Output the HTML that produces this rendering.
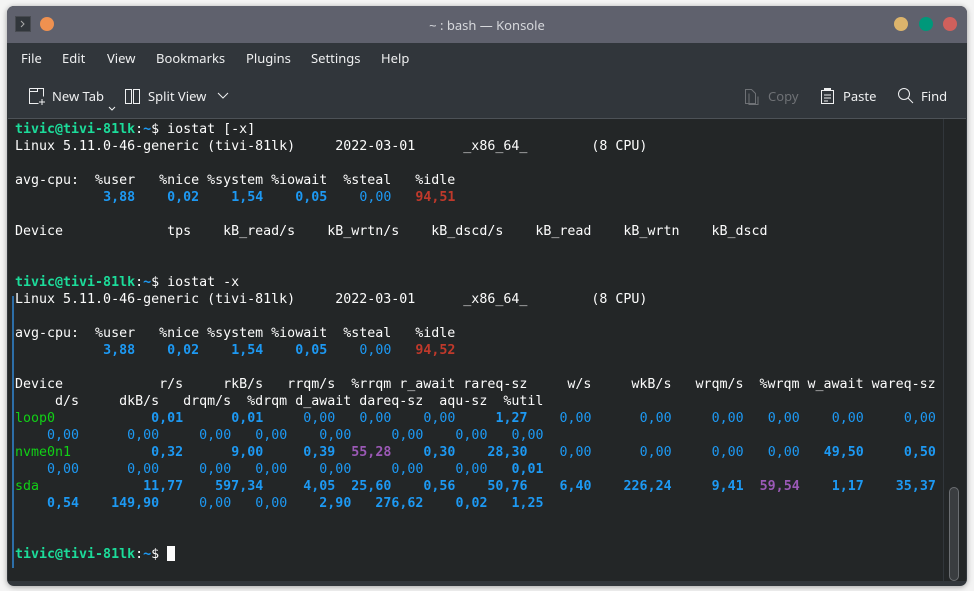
<!DOCTYPE html>
<html><head><meta charset="utf-8"><style>
*{margin:0;padding:0;box-sizing:border-box}
body{width:974px;height:591px;background:#f4f4f4;position:relative;overflow:hidden;font-family:"Noto Sans","DejaVu Sans","Liberation Sans",sans-serif}
.win{position:absolute;left:7px;top:6px;width:960px;height:580px;border-radius:7px;background:#31363b;overflow:hidden;box-shadow:0 1px 6px rgba(0,0,0,.35)}
.title{position:absolute;left:0;top:0;width:960px;height:37px;background:#5f616d}
.title .t{position:absolute;left:0;width:960px;top:10px;text-align:center;color:#d6d8dc;font-size:13px}
.ic{position:absolute;left:8px;top:10px;width:16px;height:16px;background:#31363b;border:1px solid #484b51}
.dot{position:absolute;width:14px;height:14px;border-radius:50%;top:11px}
.menu{position:absolute;top:43px;font-size:13px;color:#eff0f1}
.tb{position:absolute;top:81px;font-size:13px;color:#eff0f1}
.term{position:absolute;left:1px;top:112px;width:958px;height:463px;background:#232627;border-top:1px solid #4d5257}
pre{position:absolute;left:7px;top:2px;font-family:"DejaVu Sans Mono","Liberation Mono",monospace;font-size:13.3px;line-height:17px;color:#fcfcfc}
.g{color:#1cdc9a;font-weight:bold}.h{color:#1d99f3;font-weight:bold}
.b{color:#1d99f3;font-weight:bold}.z{color:#1d99f3}
.r{color:#c0392b;font-weight:bold}.p{color:#9b59b6;font-weight:bold}.d{color:#11d116}
.cur{display:inline-block;width:8px;height:15px;background:#fcfcfc;vertical-align:-3px}
</style></head><body>
<div class="win">
<div class="title"><div class="ic"><svg width="14" height="14" style="position:absolute;left:0;top:0"><path d="M5 4l3 3-3 3" stroke="#aaa" fill="none"/></svg></div>
<div class="dot" style="left:33px;background:#ef9150"></div>
<div class="t">~ : bash — Konsole</div>
<div class="dot" style="left:887px;background:#dcb46c"></div>
<div class="dot" style="left:912px;background:#00987a"></div>
<div class="dot" style="left:936px;background:#d0605c"></div>
</div>
<div class="menu" style="left:14px">File</div>
<div class="menu" style="left:55px">Edit</div>
<div class="menu" style="left:100px">View</div>
<div class="menu" style="left:149px">Bookmarks</div>
<div class="menu" style="left:239px">Plugins</div>
<div class="menu" style="left:304px">Settings</div>
<div class="menu" style="left:374px">Help</div>
<svg style="position:absolute;left:21px;top:81px" width="20" height="20"><path d="M1.5 1.5h14v8M1.5 1.5v15h9M1.5 4.5h8v-3" stroke="#eff0f1" fill="none"/><path d="M14 12v6M11 15h6" stroke="#eff0f1"/></svg>
<div class="tb" style="left:45px">New Tab</div>
<svg style="position:absolute;left:101px;top:100px" width="8" height="6"><path d="M1 1l3 3 3-3" stroke="#eff0f1" fill="none"/></svg>
<svg style="position:absolute;left:117px;top:82px" width="18" height="18"><rect x="1.5" y="1.5" width="6" height="14" stroke="#eff0f1" fill="none"/><rect x="9.5" y="1.5" width="6" height="14" stroke="#eff0f1" fill="none"/></svg>
<div class="tb" style="left:141px">Split View</div>
<svg style="position:absolute;left:210px;top:86px" width="12" height="8"><path d="M1 1l5 5 5-5" stroke="#eff0f1" fill="none"/></svg>
<svg style="position:absolute;left:737px;top:82px" width="16" height="18"><path d="M1.5 1.5h6l4 4v10h-10z" stroke="#6e7175" fill="none"/><path d="M5 5.5v11h9v-8" stroke="#6e7175" fill="none"/></svg>
<div class="tb" style="left:761px;color:#6e7175">Copy</div>
<svg style="position:absolute;left:813px;top:81px" width="16" height="18"><rect x="1.5" y="3.5" width="12" height="13" stroke="#eff0f1" fill="none"/><rect x="4" y="1" width="7" height="3" fill="#eff0f1"/><path d="M4 8h7M4 11h7M4 14h4" stroke="#eff0f1"/></svg>
<div class="tb" style="left:836px">Paste</div>
<svg style="position:absolute;left:890px;top:81px" width="18" height="18"><circle cx="7" cy="7" r="5.5" stroke="#eff0f1" fill="none"/><path d="M11 11l5 5" stroke="#eff0f1"/></svg>
<div class="tb" style="left:914px">Find</div>
<div class="term">
<div style="position:absolute;left:4px;top:177px;width:2px;height:272px;background:#2d6ea8"></div>
<div style="position:absolute;left:935px;top:0;width:1px;height:463px;background:#31363b"></div>
<div style="position:absolute;left:941px;top:368px;width:10px;height:94px;border-radius:5px;border:1px solid #6b6e72;background:#3a3d40"></div>
<pre><span class="g">tivic@tivi-81lk</span>:<span class="h">~</span>$ iostat [-x]
Linux 5.11.0-46-generic (tivi-81lk)     2022-03-01      _x86_64_        (8 CPU)

avg-cpu:  %user   %nice %system %iowait  %steal   %idle
           <span class="b">3,88</span>    <span class="b">0,02</span>    <span class="b">1,54</span>    <span class="b">0,05</span>    <span class="z">0,00</span>   <span class="r">94,51</span>

Device             tps    kB_read/s    kB_wrtn/s    kB_dscd/s    kB_read    kB_wrtn    kB_dscd


<span class="g">tivic@tivi-81lk</span>:<span class="h">~</span>$ iostat -x
Linux 5.11.0-46-generic (tivi-81lk)     2022-03-01      _x86_64_        (8 CPU)

avg-cpu:  %user   %nice %system %iowait  %steal   %idle
           <span class="b">3,88</span>    <span class="b">0,02</span>    <span class="b">1,54</span>    <span class="b">0,05</span>    <span class="z">0,00</span>   <span class="r">94,52</span>

Device            r/s     rkB/s   rrqm/s  %rrqm r_await rareq-sz     w/s     wkB/s   wrqm/s  %wrqm w_await wareq-sz
     d/s     dkB/s   drqm/s  %drqm d_await dareq-sz  aqu-sz  %util
<span class="d">loop0</span>            <span class="b">0,01</span>      <span class="b">0,01</span>     <span class="z">0,00</span>   <span class="z">0,00</span>    <span class="z">0,00</span>     <span class="b">1,27</span>    <span class="z">0,00</span>      <span class="z">0,00</span>     <span class="z">0,00</span>   <span class="z">0,00</span>    <span class="z">0,00</span>     <span class="z">0,00</span>
    <span class="z">0,00</span>      <span class="z">0,00</span>     <span class="z">0,00</span>   <span class="z">0,00</span>    <span class="z">0,00</span>     <span class="z">0,00</span>    <span class="z">0,00</span>   <span class="z">0,00</span>
<span class="d">nvme0n1</span>          <span class="b">0,32</span>      <span class="b">9,00</span>     <span class="b">0,39</span>  <span class="p">55,28</span>    <span class="b">0,30</span>    <span class="b">28,30</span>    <span class="z">0,00</span>      <span class="z">0,00</span>     <span class="z">0,00</span>   <span class="z">0,00</span>   <span class="b">49,50</span>     <span class="b">0,50</span>
    <span class="z">0,00</span>      <span class="z">0,00</span>     <span class="z">0,00</span>   <span class="z">0,00</span>    <span class="z">0,00</span>     <span class="z">0,00</span>    <span class="z">0,00</span>   <span class="b">0,01</span>
<span class="d">sda</span>             <span class="b">11,77</span>    <span class="b">597,34</span>     <span class="b">4,05</span>  <span class="b">25,60</span>    <span class="b">0,56</span>    <span class="b">50,76</span>    <span class="b">6,40</span>    <span class="b">226,24</span>     <span class="b">9,41</span>  <span class="p">59,54</span>    <span class="b">1,17</span>    <span class="b">35,37</span>
    <span class="b">0,54</span>    <span class="b">149,90</span>     <span class="z">0,00</span>   <span class="z">0,00</span>    <span class="b">2,90</span>   <span class="b">276,62</span>    <span class="b">0,02</span>   <span class="b">1,25</span>


<span class="g">tivic@tivi-81lk</span>:<span class="h">~</span>$ <span class="cur"></span></pre>
</div>
</div>
</body></html>
